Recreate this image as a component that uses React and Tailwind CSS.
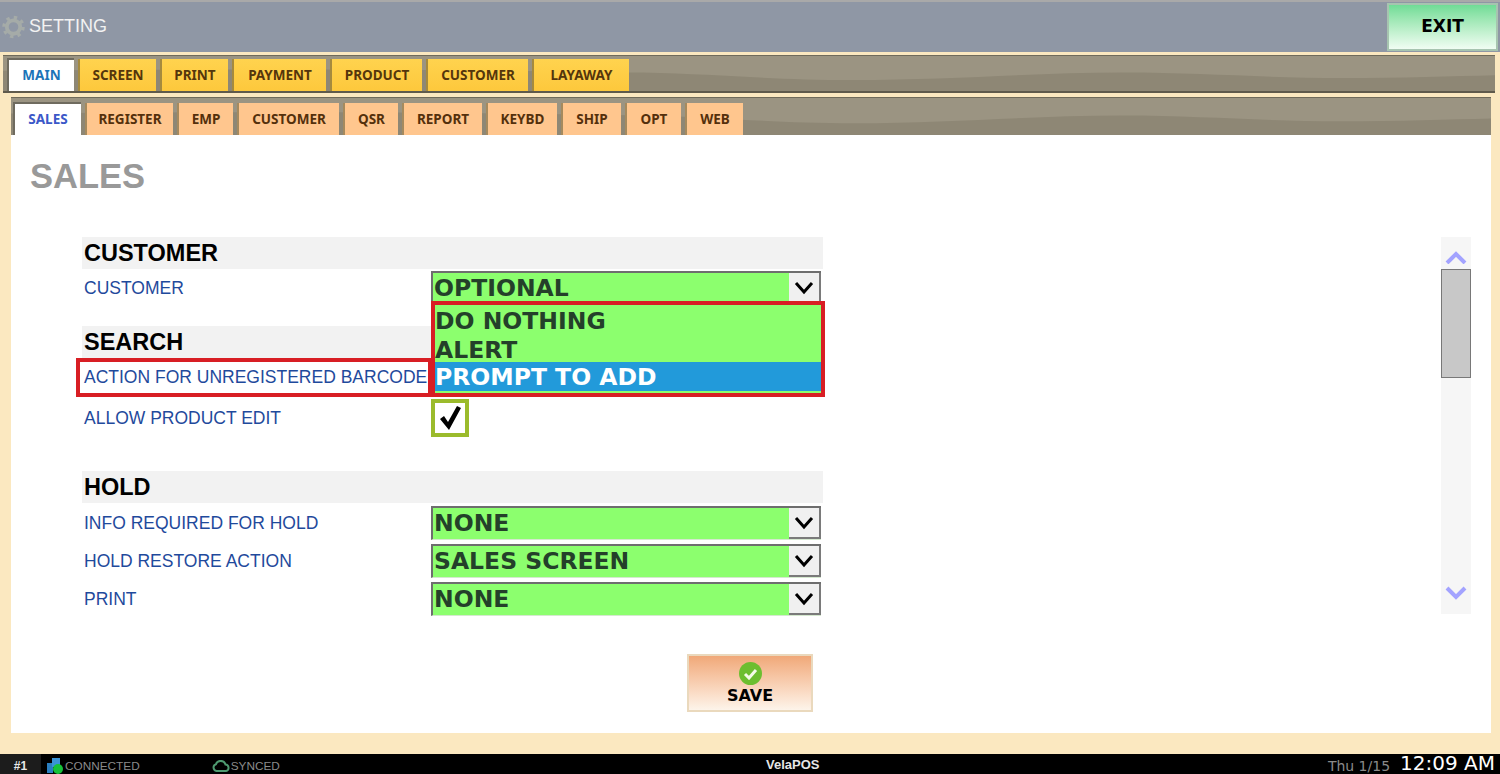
const mainTabs = ["SCREEN", "PRINT", "PAYMENT", "PRODUCT", "CUSTOMER", "LAYAWAY"];
const mainWidths = ["w-[78px]", "w-[68px]", "w-[94px]", "w-[92px]", "w-[102px]", "w-[97px]"];
const subTabs = ["REGISTER", "EMP", "CUSTOMER", "QSR", "REPORT", "KEYBD", "SHIP", "OPT", "WEB"];
const subWidths = ["w-[88px]", "w-[56px]", "w-[102px]", "w-[55px]", "w-[80px]", "w-[71px]", "w-[60px]", "w-[56px]", "w-[58px]"];

function Wave() {
  return (
    <svg className="absolute inset-0 w-full h-full" viewBox="0 0 1492 38" preserveAspectRatio="none">
      <path d="M0 38V16C200 14 450 14 640 18C720 20 770 26 850 26C950 26 1030 18 1120 18C1200 18 1260 24 1340 24C1400 24 1450 22 1492 21V38Z" fill="#8e8775" />
    </svg>
  );
}

function Select({ value }) {
  return (
    <div className="w-[390px] h-[34px] flex bg-[#8cff6e] border-t-2 border-l-2 border-[#6e6e6e] border-b border-b-[#d5e8cf]">
      <div className="flex-1 pl-px text-[#24402a] text-[23.5px] leading-[31px] font-bold font-['DejaVu_Sans',sans-serif] whitespace-nowrap">
        {value}
      </div>
      <div className="w-[32px] bg-[#f0f0f0] border-r-2 border-b-2 border-[#7a7a7a] flex items-center justify-center">
        <svg width="22" height="14" viewBox="0 0 22 14">
          <path d="M3 2L11 11L19 2" fill="none" stroke="#000" strokeWidth="3" />
        </svg>
      </div>
    </div>
  );
}

function Row({ label, value }) {
  return (
    <div className="flex items-center h-[38px]">
      <div className="w-[349px] pl-[2px] text-[#1f4a9c] text-[17.5px]">{label}</div>
      <Select value={value} />
    </div>
  );
}

function SectionHead({ children, className }) {
  return (
    <div className={`h-[32px] bg-[#f2f2f2] pl-[2px] text-black text-[23.5px] leading-[32px] font-bold ${className || ""}`}>
      {children}
    </div>
  );
}

export default function App() {
  return (
    <div className="w-[1500px] h-[774px] overflow-hidden flex flex-col bg-[#fbe8c0] font-['Liberation_Sans',sans-serif]">
      {/* title bar */}
      <div className="h-[52px] bg-[#8f97a5] border-t-2 border-t-[#a9a9a9] flex items-center justify-between pr-[2px] shrink-0">
        <div className="flex items-center gap-[4px] pl-[2px]">
          <svg width="23" height="24" viewBox="0 0 24 24" fill="none">
            <circle cx="12" cy="12" r="7" stroke="#a5aba8" strokeWidth="4" />
            <circle cx="12" cy="12" r="10" stroke="#a5aba8" strokeWidth="3.5" strokeDasharray="3.5 4.35" />
          </svg>
          <span className="text-[#f2f2f2] text-[18px] -mt-px">SETTING</span>
        </div>
        <div className="w-[111px] h-[48px] border-2 border-[#a7c4b0] bg-linear-to-b from-[#6fdc96] to-[#f0fdf3] flex items-center justify-center text-black font-bold text-[17px] font-['DejaVu_Sans',sans-serif]">
          EXIT
        </div>
      </div>

      {/* body */}
      <div className="flex-1 flex flex-col border-l-[3px] border-r-[5px] border-[#fbe8c0] pt-[3px]">
        <div className="relative h-[38px] bg-[#9b9482] flex items-end gap-[4px] pl-[4px] shrink-0 border-t border-t-[#6f6a5a] border-b-2 border-b-[#5f5a4c]">
          <Wave />
          <div className="relative w-[67px] h-[33px] bg-white border-t-2 border-l-2 border-[#6f6b5f] flex items-center justify-center text-[#1c74b8] text-[13.5px] font-bold font-['Noto_Sans',sans-serif]">
            MAIN
          </div>
          {mainTabs.map((t, i) => (
            <div
              key={t}
              className={`relative ${mainWidths[i]} h-[32px] bg-linear-to-b from-[#ffd34e] to-[#fdc83c] border-l-2 border-[#a58a3e] flex items-center justify-center text-[#54360c] text-[13.5px] font-bold font-['Noto_Sans',sans-serif]`}
            >
              {t}
            </div>
          ))}
        </div>

        <div className="flex-1 flex flex-col ml-[8px] mr-[4px] mt-[4px] mb-[21px] bg-white">
          <div className="relative h-[38px] bg-[#9b9482] flex items-end gap-[4px] pl-[2px] shrink-0 border-t border-t-[#6f6a5a]">
            <Wave />
            <div className="relative w-[68px] h-[33px] bg-white border-t-2 border-l-2 border-[#6f6b5f] flex items-center justify-center text-[#3b58c8] text-[13.5px] font-bold font-['Noto_Sans',sans-serif]">
              SALES
            </div>
            {subTabs.map((t, i) => (
              <div
                key={t}
                className={`relative ${subWidths[i]} h-[32px] bg-[#ffc68e] border-l-2 border-[#a58a5e] flex items-center justify-center text-[#54300c] text-[13.5px] font-bold font-['Noto_Sans',sans-serif]`}
              >
                {t}
              </div>
            ))}
          </div>

          <div className="flex-1 relative pl-[19px] pt-[20px]">
            <div className="text-[#999999] text-[34.5px] leading-[42px] font-bold">SALES</div>

            <div className="flex mt-[40px] ml-[52px]">
              <div className="w-[741px] relative">
                <SectionHead>CUSTOMER</SectionHead>
                <Row label="CUSTOMER" value="OPTIONAL" />
                <SectionHead className="mt-[19px]">SEARCH</SectionHead>
                <div className="h-[40px]" />
                <div className="flex items-center h-[40px]">
                  <div className="w-[349px] pl-[2px] text-[#1f4a9c] text-[17.5px]">ALLOW PRODUCT EDIT</div>
                  <div className="w-[38px] h-[38px] border-[4px] border-[#9bbb2c] bg-white flex items-center justify-center">
                    <svg width="24" height="26" viewBox="0 0 24 26">
                      <path d="M2 14L6 11L10 17L19 1L23 3L11 25Z" fill="#000" />
                    </svg>
                  </div>
                </div>
                <SectionHead className="mt-[33px] mb-px">HOLD</SectionHead>
                <Row label="INFO REQUIRED FOR HOLD" value="NONE" />
                <Row label="HOLD RESTORE ACTION" value="SALES SCREEN" />
                <Row label="PRINT" value="NONE" />

                {/* red callout on the barcode label */}
                <div className="absolute left-[-6px] top-[121px] w-[356px] h-[39px] border-[4px] border-[#d81e24] flex items-center pl-[4px] text-[#1f4a9c] text-[17.5px] whitespace-nowrap">
                  ACTION FOR UNREGISTERED BARCODE
                </div>
                {/* open drop down list */}
                <div className="absolute left-[349px] top-[64px] w-[394px] h-[96px] border-[4px] border-[#d81e24] bg-[#8cff6e] text-[23.5px] font-bold font-['DejaVu_Sans',sans-serif] text-[#24402a] whitespace-nowrap">
                  <div className="h-[29px] leading-[32px]">DO NOTHING</div>
                  <div className="h-[28px] leading-[32px]">ALERT</div>
                  <div className="h-[29px] leading-[30px] bg-[#229ada] text-white">PROMPT TO ADD</div>
                </div>
              </div>
            </div>

            <div className="absolute left-[676px] top-[519px] w-[126px] h-[58px] border-2 border-[#ead9bd] bg-linear-to-b from-[#f0a878] to-[#fdf4ea] flex flex-col items-center pt-[6px]">
              <div className="w-[23px] h-[23px] rounded-full bg-[#6cbe30] flex items-center justify-center">
                <svg width="15" height="12" viewBox="0 0 15 12">
                  <path d="M2 6L6 10L13 2" fill="none" stroke="#f4fbe8" strokeWidth="3" />
                </svg>
              </div>
              <div className="text-black text-[16px] leading-[22px] font-bold font-['DejaVu_Sans',sans-serif]">SAVE</div>
            </div>

            {/* scrollbar */}
            <div className="absolute left-[1430px] top-[102px] w-[30px] h-[377px] bg-[#f6f6f6] flex flex-col items-center">
              <svg className="mt-[13px]" width="22" height="14" viewBox="0 0 22 14">
                <path d="M2 13L11 4L20 13" fill="none" stroke="#a3a3ff" strokeWidth="4" />
              </svg>
              <div className="mt-[5px] w-[30px] h-[109px] bg-[#c8c8c8] border border-[#787878]" />
              <svg className="mt-[208px]" width="22" height="14" viewBox="0 0 22 14">
                <path d="M2 2L11 11L20 2" fill="none" stroke="#a3a3ff" strokeWidth="4" />
              </svg>
            </div>
          </div>
        </div>
      </div>

      {/* status bar */}
      <div className="h-[20px] bg-black flex items-end shrink-0 relative text-[11.8px] leading-[16px]">
        <div className="w-[41px] h-full bg-[#1c1c1c] flex items-center justify-center pt-[4px] text-[#e8e8e8] font-bold text-[12px]">#1</div>
        <svg className="ml-[5px]" width="18" height="17" viewBox="0 0 18 17">
          <path d="M1 6H7V16H1Z" fill="#2a7ec0" />
          <path d="M6 1H14V10H6Z" fill="#3a93d6" />
          <circle cx="12" cy="12" r="5" fill="#16c23a" />
        </svg>
        <span className="ml-px text-[#8a8a8a]">CONNECTED</span>
        <svg className="ml-[72px] mb-[2px]" width="18" height="12" viewBox="0 0 18 12">
          <path d="M4.5 11A3.5 3.5 0 0 1 4 4.2A5 5 0 0 1 13.5 4.5A3.3 3.3 0 0 1 14 11Z" fill="none" stroke="#4e9a70" strokeWidth="2" />
        </svg>
        <span className="ml-px text-[#8a8a8a]">SYNCED</span>
        <div className="absolute left-[766px] bottom-0 text-[#e5e5e5] text-[13px] leading-[18px] font-bold">VelaPOS</div>
        <div className="ml-auto flex items-end gap-[10px] pr-[5px] font-['DejaVu_Sans',sans-serif]">
          <span className="text-[#8a8a8a] text-[14px] leading-[15px]">Thu 1/15</span>
          <span className="text-white text-[20px] leading-[19px] mb-px">12:09 AM</span>
        </div>
      </div>
    </div>
  );
}
